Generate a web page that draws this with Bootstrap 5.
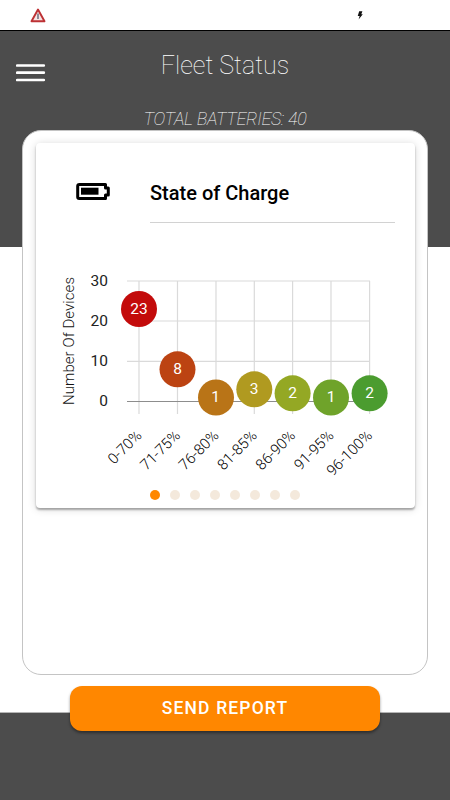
<!DOCTYPE html>
<html lang="en">
<head>
<meta charset="utf-8">
<meta name="viewport" content="width=device-width, initial-scale=1">
<title>Fleet Status</title>
<link href="https://cdn.jsdelivr.net/npm/bootstrap@5.3.0/dist/css/bootstrap.min.css" rel="stylesheet">
<style>
body{font-family:Roboto,"Liberation Sans",sans-serif;background:#fff}
.screen{width:450px;height:800px;background:linear-gradient(#4c4c4c 0 247px,#fff 247px 712px,#b5b5b5 712px 713px,#4c4c4c 713px)}
.status-bar{height:31px;border-bottom:1px solid #000;padding-left:30px;padding-right:85px}
.app-header{height:99px;padding:0 16px}
.side{width:30px}
.title-block{color:#fff}
.app-title{font-size:25px;font-weight:100;line-height:30px;padding-top:20px}
.total-line{font-size:18px;font-weight:100;line-height:22px;padding-top:27px;letter-spacing:-.3px}
.menu-btn{margin-top:32px}
.panel{width:406px;height:545px;margin-left:22px;border:1px solid #c4c4c4;border-radius:19px;padding:12px 12px 12px 13px}
.soc-card{height:365px;border:0;border-radius:4px;box-shadow:0 2px 2px rgba(0,0,0,.3),0 1px 8px rgba(0,0,0,.16)}
.card-head{padding:28px 20px 0 40px;height:81px}
.card-head svg{margin-top:10px}
.soc-title{width:245px;height:52px;margin-left:auto;border-bottom:1px solid #d2d2d2;font-size:20px;font-weight:500;line-height:44px;color:#000}
.axis{font-size:15.5px;fill:#222}
.axis-name{font-size:15px;font-weight:300;fill:#111}
.cat{font-size:15px;font-weight:300;fill:#000;text-anchor:end}
.pt{font-size:15.5px;fill:#fff;text-anchor:middle}
.dots{gap:10px;margin-top:-19px;padding-right:1px}
.dots span{width:10px;height:10px;border-radius:50%;background:#f4e9dc}
.dots .on{background:#ff8700}
.send,.send:hover{width:310px;height:45px;margin-top:11px;border:0;border-radius:12px;background:#ff8700;color:#fff;font-size:17.5px;font-weight:500;letter-spacing:1.15px;line-height:20px;padding-bottom:8px;box-shadow:0 2px 3px rgba(0,0,0,.4)}
</style>
<script src="https://cdn.jsdelivr.net/npm/bootstrap@5.3.0/dist/js/bootstrap.bundle.min.js"></script>
</head>
<body>
<main class="screen d-flex flex-column overflow-hidden">
  <div class="status-bar bg-white d-flex align-items-center justify-content-between flex-shrink-0">
    <svg width="16" height="15" viewBox="0 0 16 15"><path d="M8 1.5 14.5 13.3H1.5Z" fill="#f6e4e4" stroke="#bd3134" stroke-width="1.9" stroke-linejoin="round"/><path d="M8 5.5v5.6" stroke="#667" stroke-width="1.4"/></svg>
    <svg width="10" height="10" viewBox="0 0 10 10"><path d="M4.2 1.2H7.4L6.3 4.2H7.8L3.6 9.4 4.6 6H2.7Z" fill="#111"/></svg>
  </div>
  <header class="app-header d-flex justify-content-between align-items-start flex-shrink-0">
    <button class="menu-btn btn p-0 border-0 side d-flex" aria-label="Menu">
      <svg width="30" height="20" viewBox="0 0 30 20"><path d="M1.2 2.5h26.6M1.2 9.7h26.6M1.2 17h26.6" stroke="#fff" stroke-width="2.7" stroke-linecap="round"/></svg>
    </button>
    <div class="title-block text-center">
      <h1 class="app-title m-0">Fleet Status</h1>
      <p class="total-line fst-italic m-0">TOTAL BATTERIES: 40</p>
    </div>
    <div class="side"></div>
  </header>
  <section class="panel bg-white flex-shrink-0">
    <div class="card soc-card">
      <div class="card-head d-flex align-items-start">
        <svg width="36" height="21" viewBox="0 0 36 21"><path d="M3 3.6h26.5v3.5h2.8v7h-2.8v3.4H3.2q-1.5 0-1.5-1.5V5q0-1.4 1.5-1.4Z" fill="#fff" stroke="#000" stroke-width="3" stroke-linejoin="round"/><path d="M5 6.7h17.5v7H5Z"/></svg>
        <h2 class="soc-title mb-0">State of Charge</h2>
      </div>
      <svg class="flex-shrink-0" width="379" height="285" viewBox="36 224 379 285" role="img" aria-label="Number of devices by state of charge">
        <g stroke="#dadada" stroke-width="1.2">
          <path d="M127 281H370M127 321H370M127 361.3H370"/>
          <path d="M139 281V414M177.5 281V414M216 281V414M254.3 281V414M292.6 281V414M331 281V414M369.6 281V414"/>
        </g>
        <path d="M127 401.5H370" stroke="#8d8d8d"/>
        <g class="axis" text-anchor="end">
          <text x="108" y="286">30</text><text x="108" y="326">20</text><text x="108" y="366">10</text><text x="108" y="406">0</text>
        </g>
        <text class="axis-name" transform="translate(74 341) rotate(-90)" text-anchor="middle" textLength="128" lengthAdjust="spacing">Number Of Devices</text>
        <circle cx="139" cy="309" r="18" fill="#c30b0b"/><circle cx="177.5" cy="369.3" r="18" fill="#bc4312"/><circle cx="216" cy="397.5" r="18" fill="#b97417"/><circle cx="254.3" cy="389.3" r="18" fill="#b09a20"/><circle cx="292.6" cy="393.3" r="18" fill="#94a824"/><circle cx="331" cy="397.5" r="18" fill="#6fa32a"/><circle cx="369.6" cy="393.3" r="18" fill="#4b9c2f"/>
        <g class="pt">
          <text x="139" y="314">23</text><text x="177.5" y="374">8</text><text x="215.5" y="402">1</text><text x="254" y="394">3</text><text x="292.6" y="398">2</text><text x="331" y="402">1</text><text x="369.6" y="398">2</text>
        </g>
        <g class="cat">
          <text transform="translate(142.5 436.5) rotate(-45)">0-70%</text><text transform="translate(181 436.5) rotate(-45)">71-75%</text><text transform="translate(219.5 436.5) rotate(-45)">76-80%</text><text transform="translate(257.8 436.5) rotate(-45)">81-85%</text><text transform="translate(296.2 436.5) rotate(-45)">86-90%</text><text transform="translate(334.6 436.5) rotate(-45)">91-95%</text><text transform="translate(373 436.5) rotate(-45)">96-100%</text>
        </g>
      </svg>
      <div class="dots d-flex justify-content-center"><span class="on"></span><span></span><span></span><span></span><span></span><span></span><span></span><span></span></div>
    </div>
  </section>
  <button class="send btn align-self-center flex-shrink-0">SEND REPORT</button>
</main>
</body>
</html>
